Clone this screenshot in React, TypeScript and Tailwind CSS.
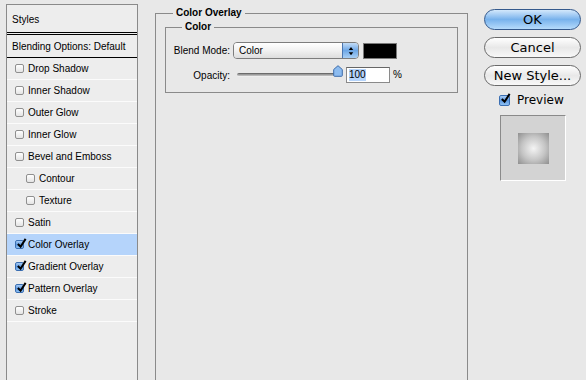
import React from 'react';

const effects = [
  { label: 'Drop Shadow', on: false },
  { label: 'Inner Shadow', on: false },
  { label: 'Outer Glow', on: false },
  { label: 'Inner Glow', on: false },
  { label: 'Bevel and Emboss', on: false },
  { label: 'Contour', on: false, sub: true },
  { label: 'Texture', on: false, sub: true },
  { label: 'Satin', on: false },
  { label: 'Color Overlay', on: true, active: true },
  { label: 'Gradient Overlay', on: true },
  { label: 'Pattern Overlay', on: true },
  { label: 'Stroke', on: false },
];

function Checkbox({ on, big }: { on: boolean; big?: boolean }) {
  const size = big ? 'w-[11px] h-[11px]' : 'w-[9px] h-[9px]';
  if (!on) {
    return (
      <span
        className={`${size} shrink-0 rounded-[2px] border border-[#8f8f8f] bg-gradient-to-b from-[#ffffff] to-[#e4e4e4]`}
      />
    );
  }
  return (
    <span className={`relative ${size} shrink-0`}>
      <span className="absolute inset-0 rounded-[2px] border border-[#3b6fb3] bg-gradient-to-b from-[#a9cdf5] via-[#5d98e0] to-[#8dc0f3]" />
      <svg
        viewBox="0 0 12 12"
        className="absolute left-[1px] top-[-2px] w-[11px] h-[11px]"
      >
        <path d="M2 6.5 L5 9.5 L10.5 1" fill="none" stroke="#000" strokeWidth="2.2" />
      </svg>
    </span>
  );
}

function AquaButton({ label, primary }: { label: string; primary?: boolean }) {
  return (
    <button
      type="button"
      className={
        primary
          ? 'w-[97px] h-[21px] rounded-full border border-[#34598c] bg-gradient-to-b from-[#d3e8fb] via-[#78b2ec] to-[#b6dbfb] text-[13px] leading-none text-black'
          : 'w-[97px] h-[21px] rounded-full border border-[#6a6a6a] bg-gradient-to-b from-[#ffffff] via-[#e8e8e8] to-[#f8f8f8] text-[13px] leading-none text-black'
      }
      style={{ fontFamily: '"DejaVu Sans", sans-serif' }}
    >
      {label}
    </button>
  );
}

export default function App() {
  return (
    <div className="w-[586px] h-[380px] overflow-hidden bg-[#e8e8e8] flex items-start font-['Liberation_Sans',Arial,sans-serif] text-[10px] text-black">
      {/* styles list */}
      <div className="ml-[6px] mt-[4px] w-[132px] h-[376px] shrink-0 border border-b-0 border-[#8a8a8a] bg-[#ededed] flex flex-col">
        <div className="h-[27px] pl-[5px] flex items-center pt-[2px]">Styles</div>
        <div className="h-[1px] bg-black" />
        <div className="h-[1px]" />
        <div className="h-[1px] bg-black" />
        <div className="h-[22px] pl-[5px] flex items-center">Blending Options: Default</div>
        <div className="h-[1px] bg-black" />
        {effects.map((e) => (
          <div
            key={e.label}
            className={`h-[22px] shrink-0 border-b border-[#fbfbfb] flex items-center gap-[4px] ${
              e.sub ? 'pl-[19px]' : 'pl-[8px]'
            } ${e.active ? 'bg-[#b5d4fb]' : ''}`}
          >
            <Checkbox on={e.on} />
            <span>{e.label}</span>
          </div>
        ))}
      </div>

      {/* color overlay panel */}
      <fieldset className="ml-[17px] mt-[6px] w-[313px] h-[400px] shrink-0 border border-[#8a8a8a]">
        <legend className="ml-[17px] px-[3px] font-bold leading-[14px]">Color Overlay</legend>
        <fieldset className="mx-[9px] border border-[#8a8a8a] pb-[9px]">
          <legend className="ml-[16px] px-[3px] font-bold leading-[14px]">Color</legend>
          <div className="mt-[8px] flex items-center h-[17px]">
            <span className="w-[64px] text-right">Blend Mode:</span>
            <div className="ml-[3px] w-[126px] h-[17px] flex rounded-[4px] border border-[#7d7d7d] overflow-hidden">
              <div className="flex-1 pl-[5px] flex items-center bg-gradient-to-b from-[#ffffff] via-[#f1f1f1] to-[#dedede]">
                Color
              </div>
              <div className="w-[16px] border-l border-[#4a76b0] bg-gradient-to-b from-[#c3dcf6] via-[#6da7e6] to-[#a8cff5] flex items-center justify-center">
                <svg viewBox="0 0 8 12" className="w-[6px] h-[10px]">
                  <path d="M4 0.5 L7 4.5 L1 4.5 Z M4 11.5 L7 7.5 L1 7.5 Z" fill="#000" />
                </svg>
              </div>
            </div>
            <div className="ml-[4px] w-[34px] h-[16px] bg-black border border-[#7a7a7a]" />
          </div>
          <div className="mt-[8px] flex items-center h-[16px]">
            <span className="w-[64px] text-right">Opacity:</span>
            <div className="ml-[3px] w-[110px] h-[16px] pl-[4px] flex items-center">
              <div className="relative w-[105px] h-[12px] flex items-center">
                <div className="w-[100px] h-[4px] rounded-full bg-gradient-to-b from-[#555] via-[#9a9a9a] to-[#c8c8c8] border-b border-[#eee]" />
                <svg viewBox="0 0 10 12" className="absolute left-[96px] top-[-4px] w-[10px] h-[12px]">
                  <path
                    d="M5 0.7 L9.3 4.5 L9.3 10.5 Q9.3 11.3 8.5 11.3 L1.5 11.3 Q0.7 11.3 0.7 10.5 L0.7 4.5 Z"
                    fill="#8dbcf0"
                    stroke="#3c6cab"
                    strokeWidth="1"
                  />
                </svg>
              </div>
            </div>
            <div className="ml-[3px] w-[44px] h-[16px] bg-white border border-[#8a8a8a] border-t-[#666] pl-[2px] flex items-center">
              <span className="bg-[#b5d4fb] leading-[12px]">100</span>
            </div>
            <span className="ml-[3px] -mt-[2px]">%</span>
          </div>
        </fieldset>
      </fieldset>

      {/* buttons */}
      <div className="ml-[16px] mt-[9px] w-[97px] shrink-0 flex flex-col items-start">
        <AquaButton label="OK" primary />
        <div className="mt-[7px]">
          <AquaButton label="Cancel" />
        </div>
        <div className="mt-[7px]">
          <AquaButton label="New Style..." />
        </div>
        <div
          className="mt-[7px] ml-[15px] flex items-center gap-[7px] text-[12px] leading-[14px]"
          style={{ fontFamily: '"DejaVu Sans", sans-serif' }}
        >
          <Checkbox on big />
          <span>Preview</span>
        </div>
        <div className="mt-[8px] ml-[16px] w-[66px] h-[66px] bg-[#d3d3d3] border border-[#8a8a8a] border-r-white border-b-white flex items-center justify-center">
          <div className="w-[31px] h-[31px] bg-[radial-gradient(circle,#f4f4f4_0%,#c4c4c4_55%,#8f8f8f_100%)]" />
        </div>
      </div>
    </div>
  );
}
